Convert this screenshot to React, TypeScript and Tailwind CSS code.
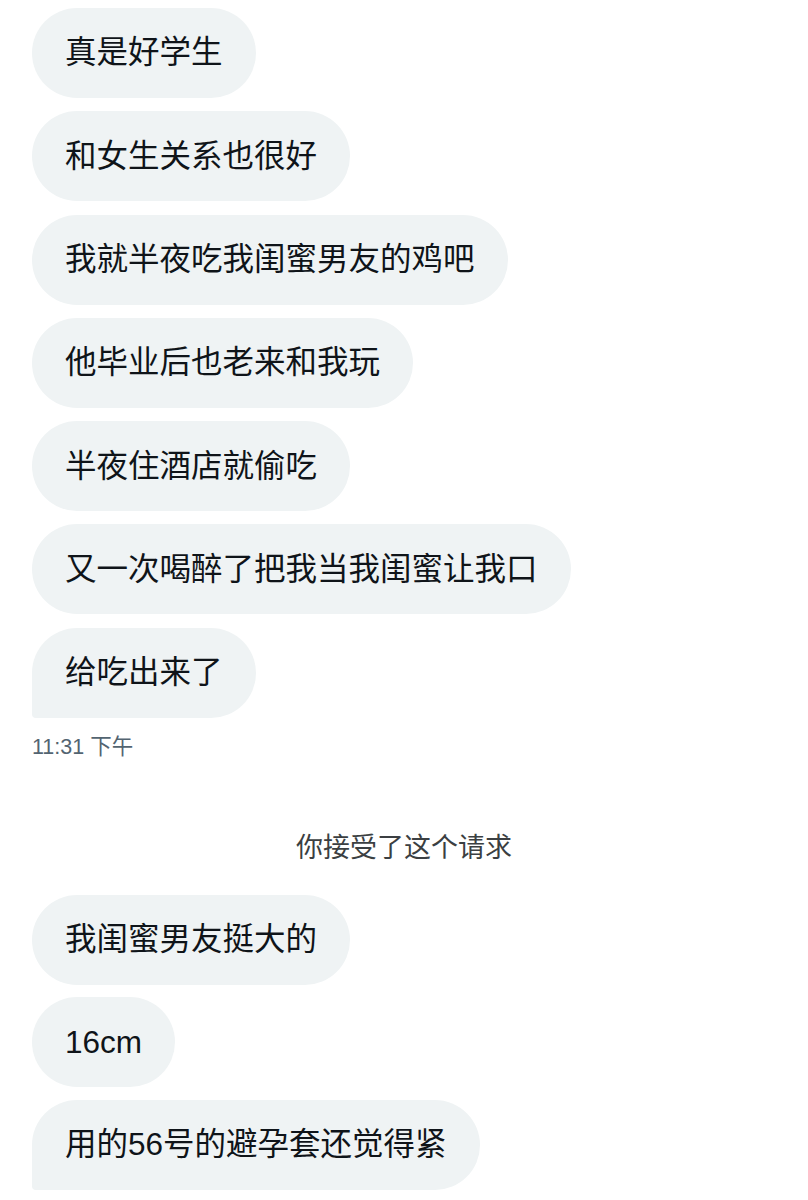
const font = { fontFamily: '"Liberation Sans", "Noto Sans CJK SC", sans-serif' };

const first = [
  "真是好学生",
  "和女生关系也很好",
  "我就半夜吃我闺蜜男友的鸡吧",
  "他毕业后也老来和我玩",
  "半夜住酒店就偷吃",
  "又一次喝醉了把我当我闺蜜让我口",
  "给吃出来了",
];

const second = ["我闺蜜男友挺大的", "16cm", "用的56号的避孕套还觉得紧"];

function Bubble({ text, last }: { text: string; last: boolean }) {
  return (
    <div
      className={`flex h-[90px] items-center self-start bg-[#eff3f4] px-[33px] text-[31.5px] text-[#0f1419] rounded-[45px] ${
        last ? "rounded-bl-[4px]" : ""
      }`}
    >
      {text}
    </div>
  );
}

export default function App() {
  return (
    <div className="min-h-[1200px] w-[808px] bg-white overflow-hidden" style={font}>
      <div className="flex flex-col gap-[13.3px] pl-[32px] pt-[8px]">
        {first.map((m, i) => (
          <Bubble key={i} text={m} last={i === first.length - 1} />
        ))}
      </div>
      <div className="pl-[32px] pt-[14px] text-[21.5px] leading-[30px] text-[#536471]">
        11:31 下午
      </div>
      <div className="pt-[66px] text-center text-[27px] leading-[40px] text-[#3b3f42]">
        你接受了这个请求
      </div>
      <div className="flex flex-col gap-[12.5px] pl-[32px] pt-[27px]">
        {second.map((m, i) => (
          <Bubble key={i} text={m} last={i === second.length - 1} />
        ))}
      </div>
    </div>
  );
}
